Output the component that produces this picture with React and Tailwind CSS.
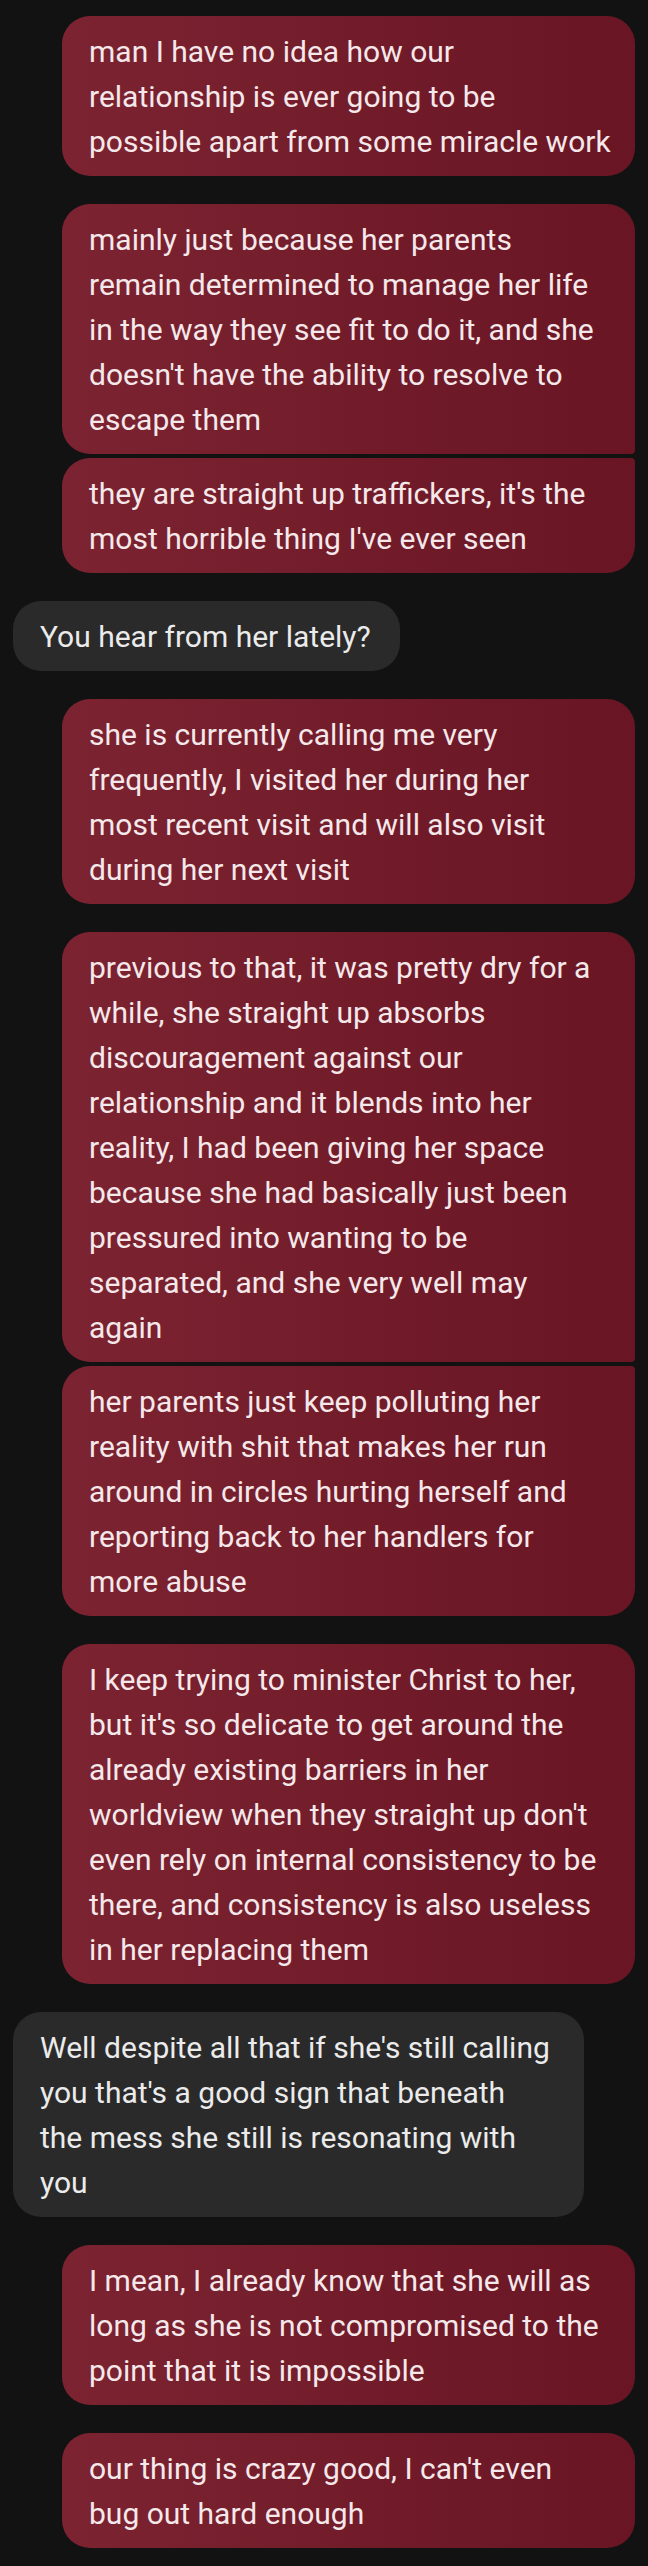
const messages = [
  { from: "me", lines: ["man I have no idea how our", "relationship is ever going to be", "possible apart from some miracle work"] },
  { from: "me", groupNext: true, lines: ["mainly just because her parents", "remain determined to manage her life", "in the way they see fit to do it, and she", "doesn't have the ability to resolve to", "escape them"] },
  { from: "me", groupPrev: true, lines: ["they are straight up traffickers, it's the", "most horrible thing I've ever seen"] },
  { from: "them", lines: ["You hear from her lately?"] },
  { from: "me", lines: ["she is currently calling me very", "frequently, I visited her during her", "most recent visit and will also visit", "during her next visit"] },
  { from: "me", groupNext: true, lines: ["previous to that, it was pretty dry for a", "while, she straight up absorbs", "discouragement against our", "relationship and it blends into her", "reality, I had been giving her space", "because she had basically just been", "pressured into wanting to be", "separated, and she very well may", "again"] },
  { from: "me", groupPrev: true, lines: ["her parents just keep polluting her", "reality with shit that makes her run", "around in circles hurting herself and", "reporting back to her handlers for", "more abuse"] },
  { from: "me", lines: ["I keep trying to minister Christ to her,", "but it's so delicate to get around the", "already existing barriers in her", "worldview when they straight up don't", "even rely on internal consistency to be", "there, and consistency is also useless", "in her replacing them"] },
  { from: "them", wide: true, lines: ["Well despite all that if she's still calling", "you that's a good sign that beneath", "the mess she still is resonating with", "you"] },
  { from: "me", lines: ["I mean, I already know that she will as", "long as she is not compromised to the", "point that it is impossible"] },
  { from: "me", lines: ["our thing is crazy good, I can't even", "bug out hard enough"] },
];

function Lines({ lines }) {
  return lines.map((l, i) => (
    <span key={i} className="block whitespace-nowrap">
      {l}
    </span>
  ));
}

function Bubble({ m, first }) {
  const mt = first ? "" : m.groupPrev ? "mt-[4px]" : "mt-[28px]";
  if (m.from === "them") {
    return (
      <div
        className={`${mt} self-start ${m.wide ? "w-[571px]" : "w-fit"} rounded-[28px] bg-[#2a2a2a] pl-[27px] pr-[29px] pt-[13px] pb-[12px] text-[#ebebeb]`}
      >
        <Lines lines={m.lines} />
      </div>
    );
  }
  const corners = m.groupNext
    ? "rounded-l-[28px] rounded-tr-[28px] rounded-br-[4px]"
    : m.groupPrev
    ? "rounded-l-[28px] rounded-br-[28px] rounded-tr-[4px]"
    : "rounded-[28px]";
  return (
    <div
      className={`${mt} self-end w-[573px] ${corners} bg-gradient-to-r from-[#7c2331] to-[#691524] pl-[27px] pr-[20px] pt-[13px] pb-[12px] text-[#f5e8ea]`}
    >
      <Lines lines={m.lines} />
    </div>
  );
}

export default function App() {
  return (
    <div
      className="min-h-screen w-full bg-[#121212] px-[13px] pt-[16px] pb-[18px] flex flex-col text-[30px] leading-[45px]"
      style={{ fontFamily: "Roboto, 'Noto Sans', sans-serif" }}
    >
      {messages.map((m, i) => (
        <Bubble key={i} m={m} first={i === 0} />
      ))}
    </div>
  );
}
